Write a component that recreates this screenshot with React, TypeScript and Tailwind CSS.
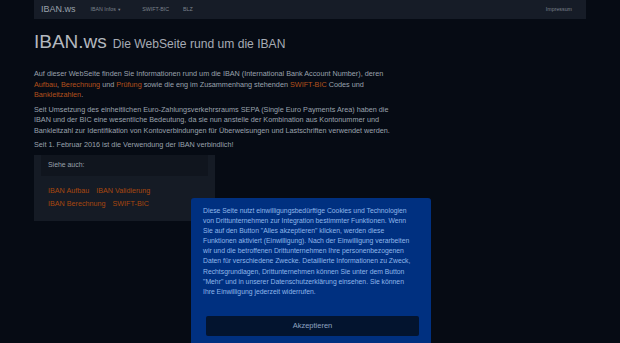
import React from 'react'

const links = [
  ['IBAN Aufbau', 'IBAN Validierung'],
  ['IBAN Berechnung', 'SWIFT-BIC'],
]

function Navbar() {
  return (
    <nav className="h-[19px] bg-[#161c27] flex items-center pl-[7px] pr-[14px]">
      <span className="text-[9px] text-[#9aa1ab] mr-[15px]">IBAN.ws</span>
      <span className="text-[5.3px] text-[#7b828c] mr-[21px]">
        IBAN Infos <span className="text-[4px]">▼</span>
      </span>
      <span className="text-[5.3px] text-[#7b828c] mr-[14px]">SWIFT-BIC</span>
      <span className="text-[5.3px] text-[#7b828c]">BLZ</span>
      <span className="ml-auto text-[5.3px] text-[#7b828c]">Impressum</span>
    </nav>
  )
}

function CookieBanner() {
  return (
    <div className="fixed left-[191px] top-[198px] w-[240px] h-[160px] bg-[#003080] rounded-[3px] pl-[12px] pt-[8px]">
      <p className="w-[214px] text-[6.8px] leading-[10.1px] text-[#8fb6ea]">
        Diese Seite nutzt einwilligungsbedürftige Cookies und Technologien von Drittunternehmen zur
        Integration bestimmter Funktionen. Wenn Sie auf den Button "Alles akzeptieren" klicken, werden
        diese Funktionen aktiviert (Einwilligung). Nach der Einwilligung verarbeiten wir und die
        betroffenen Drittunternehmen Ihre personenbezogenen Daten für verschiedene Zwecke.
        Detaillierte Informationen zu Zweck, Rechtsgrundlagen, Drittunternehmen können Sie unter dem
        Button "Mehr" und in unserer Datenschutzerklärung einsehen. Sie können Ihre Einwilligung
        jederzeit widerrufen.
      </p>
      <button className="mt-[19px] ml-[3px] w-[213px] h-[20px] rounded-[2px] bg-[#03142f] text-[7.5px] text-[#8ea3c0]">
        Akzeptieren
      </button>
    </div>
  )
}

export default function App() {
  return (
    <div className="min-h-[343px] bg-[#060b14] font-['Liberation_Sans',Arial,sans-serif] overflow-hidden">
      <div className="w-[552px] ml-[34px]">
        <Navbar />

        <h1 className="mt-[11px] flex items-baseline gap-[6px]">
          <span className="text-[19px] leading-[24px] text-[#b3b8bf]">IBAN.ws</span>
          <span className="text-[12.1px] text-[#a6acb4]">Die WebSeite rund um die IBAN</span>
        </h1>

        <div className="mt-[15px] text-[7.25px] leading-[10.5px] text-[#9aa2ad] w-[362px]">
          <p>
            Auf dieser WebSeite finden Sie Informationen rund um die IBAN (International Bank Account Number), deren{' '}
            <span className="text-[#b4511c]">Aufbau</span>,{' '}
            <span className="text-[#b4511c]">Berechnung</span> und{' '}
            <span className="text-[#b4511c]">Prüfung</span> sowie die eng im Zusammenhang stehenden{' '}
            <span className="text-[#b4511c]">SWIFT-BIC</span> Codes und{' '}
            <span className="text-[#b4511c]">Bankleitzahlen</span>.
          </p>
          <p className="mt-[4px]">
            Seit Umsetzung des einheitlichen Euro-Zahlungsverkehrsraums SEPA (Single Euro Payments Area) haben die
            IBAN und der BIC eine wesentliche Bedeutung, da sie nun anstelle der Kombination aus Kontonummer und
            Bankleitzahl zur Identifikation von Kontoverbindungen für Überweisungen und Lastschriften verwendet werden.
          </p>
          <p className="mt-[4px]">Seit 1. Februar 2016 ist die Verwendung der IBAN verbindlich!</p>
        </div>

        <div className="mt-[4px] w-[181px] h-[66px] bg-[#151b25] px-[7px]">
          <div className="h-[21px] bg-[#10151e] flex items-center px-[7px] text-[6.9px] text-[#9aa2ad]">
            Siehe auch:
          </div>
          <div className="pt-[8px] px-[7px] text-[7.2px] leading-[13px] text-[#a8470f]">
            {links.map((row, i) => (
              <div key={i} className="flex gap-[7px]">
                {row.map((l) => (
                  <span key={l}>{l}</span>
                ))}
              </div>
            ))}
          </div>
        </div>
      </div>

      <CookieBanner />
    </div>
  )
}
